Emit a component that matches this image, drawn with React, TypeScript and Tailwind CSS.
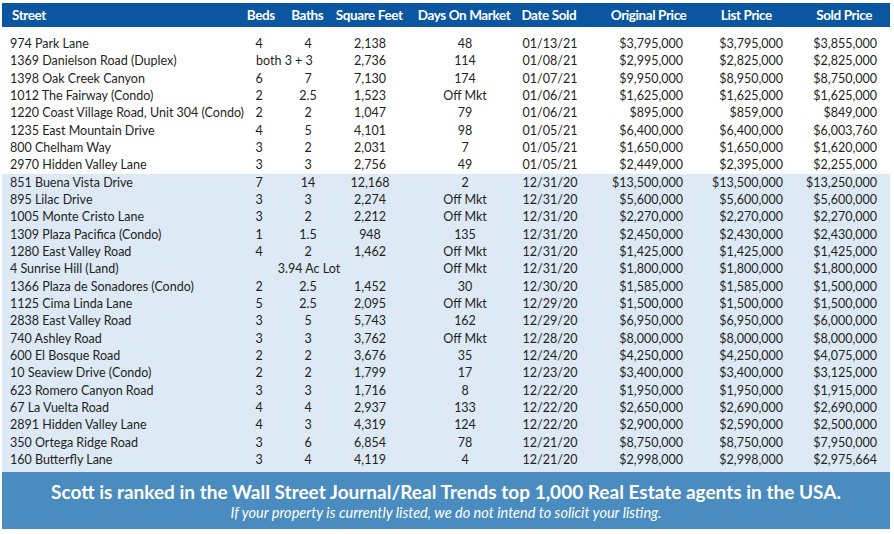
import React from "react";

type Row = {
  street: string;
  beds?: string;
  baths?: string;
  span?: "both" | "lot";
  spanText?: string;
  sqft?: string;
  dom: string;
  date: string;
  orig: string;
  list: string;
  sold: string;
};

const r = (
  street: string,
  beds: string,
  baths: string,
  sqft: string,
  dom: string,
  date: string,
  orig: string,
  list: string,
  sold: string
): Row => ({ street, beds, baths, sqft, dom, date, orig, list, sold });

const rows2021: Row[] = [
  r("974 Park Lane", "4", "4", "2,138", "48", "01/13/21", "$3,795,000", "$3,795,000", "$3,855,000"),
  {
    street: "1369 Danielson Road (Duplex)",
    span: "both",
    spanText: "both 3 + 3",
    sqft: "2,736",
    dom: "114",
    date: "01/08/21",
    orig: "$2,995,000",
    list: "$2,825,000",
    sold: "$2,825,000",
  },
  r("1398 Oak Creek Canyon", "6", "7", "7,130", "174", "01/07/21", "$9,950,000", "$8,950,000", "$8,750,000"),
  r("1012 The Fairway (Condo)", "2", "2.5", "1,523", "Off Mkt", "01/06/21", "$1,625,000", "$1,625,000", "$1,625,000"),
  r("1220 Coast Village Road, Unit 304 (Condo)", "2", "2", "1,047", "79", "01/06/21", "$895,000", "$859,000", "$849,000"),
  r("1235 East Mountain Drive", "4", "5", "4,101", "98", "01/05/21", "$6,400,000", "$6,400,000", "$6,003,760"),
  r("800 Chelham Way", "3", "2", "2,031", "7", "01/05/21", "$1,650,000", "$1,650,000", "$1,620,000"),
  r("2970 Hidden Valley Lane", "3", "3", "2,756", "49", "01/05/21", "$2,449,000", "$2,395,000", "$2,255,000"),
];

const rows2020: Row[] = [
  r("851 Buena Vista Drive", "7", "14", "12,168", "2", "12/31/20", "$13,500,000", "$13,500,000", "$13,250,000"),
  r("895 Lilac Drive", "3", "3", "2,274", "Off Mkt", "12/31/20", "$5,600,000", "$5,600,000", "$5,600,000"),
  r("1005 Monte Cristo Lane", "3", "2", "2,212", "Off Mkt", "12/31/20", "$2,270,000", "$2,270,000", "$2,270,000"),
  r("1309 Plaza Pacifica (Condo)", "1", "1.5", "948", "135", "12/31/20", "$2,450,000", "$2,430,000", "$2,430,000"),
  r("1280 East Valley Road", "4", "2", "1,462", "Off Mkt", "12/31/20", "$1,425,000", "$1,425,000", "$1,425,000"),
  {
    street: "4 Sunrise Hill (Land)",
    span: "lot",
    spanText: "3.94 Ac Lot",
    dom: "Off Mkt",
    date: "12/31/20",
    orig: "$1,800,000",
    list: "$1,800,000",
    sold: "$1,800,000",
  },
  r("1366 Plaza de Sonadores (Condo)", "2", "2.5", "1,452", "30", "12/30/20", "$1,585,000", "$1,585,000", "$1,500,000"),
  r("1125 Cima Linda Lane", "5", "2.5", "2,095", "Off Mkt", "12/29/20", "$1,500,000", "$1,500,000", "$1,500,000"),
  r("2838 East Valley Road", "3", "5", "5,743", "162", "12/29/20", "$6,950,000", "$6,950,000", "$6,000,000"),
  r("740 Ashley Road", "3", "3", "3,762", "Off Mkt", "12/28/20", "$8,000,000", "$8,000,000", "$8,000,000"),
  r("600 El Bosque Road", "2", "2", "3,676", "35", "12/24/20", "$4,250,000", "$4,250,000", "$4,075,000"),
  r("10 Seaview Drive (Condo)", "2", "2", "1,799", "17", "12/23/20", "$3,400,000", "$3,400,000", "$3,125,000"),
  r("623 Romero Canyon Road", "3", "3", "1,716", "8", "12/22/20", "$1,950,000", "$1,950,000", "$1,915,000"),
  r("67 La Vuelta Road", "4", "4", "2,937", "133", "12/22/20", "$2,650,000", "$2,690,000", "$2,690,000"),
  r("2891 Hidden Valley Lane", "4", "3", "4,319", "124", "12/22/20", "$2,900,000", "$2,590,000", "$2,500,000"),
  r("350 Ortega Ridge Road", "3", "6", "6,854", "78", "12/21/20", "$8,750,000", "$8,750,000", "$7,950,000"),
  r("160 Butterfly Lane", "3", "4", "4,119", "4", "12/21/20", "$2,998,000", "$2,998,000", "$2,975,664"),
];

function DataRow({ row }: { row: Row }) {
  return (
    <div className="grid grid-cols-[243px_28px_70px_54px_136px_34px_116px_100px_94px] h-[17.33px] items-center whitespace-nowrap">
      <div className="pl-[8px]">{row.street}</div>
      {row.span === "both" ? (
        <div className="col-span-2 pl-[11px]">{row.spanText}</div>
      ) : row.span === "lot" ? (
        <div className="col-span-3 flex justify-center pr-[24px]">{row.spanText}</div>
      ) : (
        <>
          <div className="flex justify-center">{row.beds}</div>
          <div className="flex justify-center">{row.baths}</div>
        </>
      )}
      {row.span !== "lot" && <div className="flex justify-center">{row.sqft}</div>}
      <div className="flex justify-center">{row.dom}</div>
      <div className="flex justify-center">{row.date}</div>
      <div className="text-right">{row.orig}</div>
      <div className="text-right">{row.list}</div>
      <div className="text-right">{row.sold}</div>
    </div>
  );
}

export default function App() {
  return (
    <div className="w-[894px] h-[534px] bg-white pt-[3px] pl-[2px] pr-[4px] overflow-hidden">
      <div
        className="h-[24px] bg-[#0b56a1] flex items-center text-white font-bold text-[13.5px] tracking-[-0.4px] whitespace-nowrap"
        style={{ fontFamily: 'Lato, "Open Sans", sans-serif' }}
      >
        <div className="w-[243px] pl-[10px]">Street</div>
        <div className="w-[33px] flex justify-center">Beds</div>
        <div className="w-[60px] flex justify-center">Baths</div>
        <div className="w-[64px] flex justify-center">Square Feet</div>
        <div className="w-[126px] flex justify-center">Days On Market</div>
        <div className="w-[44px] flex justify-center">Date Sold</div>
        <div className="w-[28px]" />
        <div className="w-[100px] flex justify-center">Original Price</div>
        <div className="w-[96px] flex justify-center">List Price</div>
        <div className="w-[4px]" />
        <div className="w-[92px] flex justify-center">Sold Price</div>
      </div>
      <div
        className="text-[12.5px] text-[#231f20]"
        style={{ fontFamily: 'Lato, "Open Sans", sans-serif' }}
      >
        <div className="pt-[8px] bg-white">
          {rows2021.map((row, i) => (
            <DataRow key={i} row={row} />
          ))}
        </div>
        <div className="bg-[#dde9f5] pb-[4px]">
          {rows2020.map((row, i) => (
            <DataRow key={i} row={row} />
          ))}
        </div>
      </div>
      <div
        className="h-[57px] bg-[#4a8bc0] flex flex-col items-center justify-center text-white"
        style={{ fontFamily: 'Lato, "Open Sans", sans-serif' }}
      >
        <div className="text-[19px] font-bold leading-[23px] mt-[1px]">
          Scott is ranked in the Wall Street Journal/Real Trends top 1,000 Real Estate agents in the USA.
        </div>
        <div className="text-[14.5px] italic leading-[19px]">
          If your property is currently listed, we do not intend to solicit your listing.
        </div>
      </div>
    </div>
  );
}
